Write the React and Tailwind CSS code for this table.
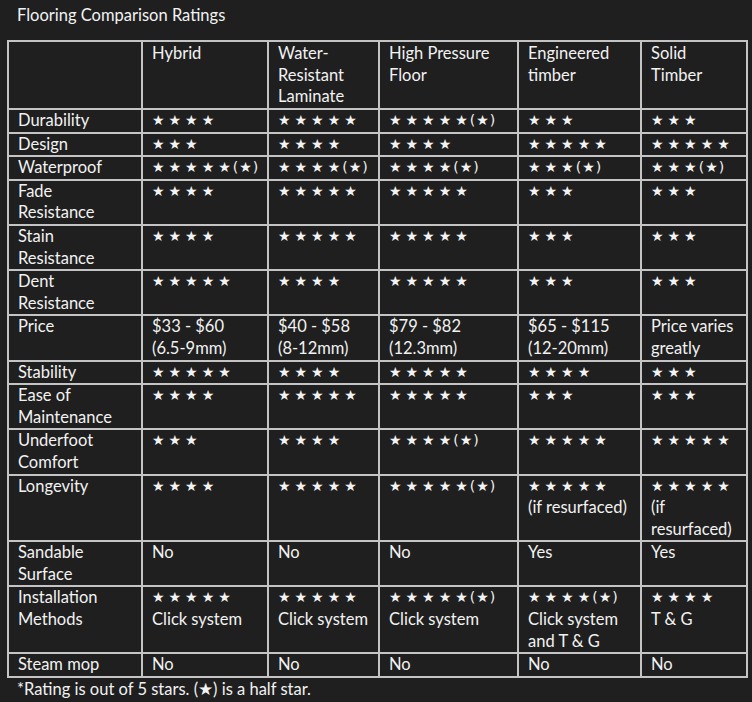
import React from "react";

const cols = [
  ["Hybrid"],
  ["Water-", "Resistant", "Laminate"],
  ["High Pressure", "Floor"],
  ["Engineered", "timber"],
  ["Solid", "Timber"],
];

// s = number of full stars, h = has half star, t = extra text lines
const rows = [
  { label: ["Durability"], cells: [{ s: 4 }, { s: 5 }, { s: 5, h: true }, { s: 3 }, { s: 3 }] },
  { label: ["Design"], cells: [{ s: 3 }, { s: 4 }, { s: 4 }, { s: 5 }, { s: 5 }] },
  { label: ["Waterproof"], cells: [{ s: 5, h: true }, { s: 4, h: true }, { s: 4, h: true }, { s: 3, h: true }, { s: 3, h: true }] },
  { label: ["Fade", "Resistance"], cells: [{ s: 4 }, { s: 5 }, { s: 5 }, { s: 3 }, { s: 3 }] },
  { label: ["Stain", "Resistance"], cells: [{ s: 4 }, { s: 5 }, { s: 5 }, { s: 3 }, { s: 3 }] },
  { label: ["Dent", "Resistance"], cells: [{ s: 5 }, { s: 4 }, { s: 5 }, { s: 3 }, { s: 3 }] },
  {
    label: ["Price"],
    cells: [
      { t: ["$33 - $60", "(6.5-9mm)"] },
      { t: ["$40 - $58", "(8-12mm)"] },
      { t: ["$79 - $82", "(12.3mm)"] },
      { t: ["$65 - $115", "(12-20mm)"] },
      { t: ["Price varies", "greatly"] },
    ],
  },
  { label: ["Stability"], cells: [{ s: 5 }, { s: 4 }, { s: 5 }, { s: 4 }, { s: 3 }] },
  { label: ["Ease of", "Maintenance"], cells: [{ s: 4 }, { s: 5 }, { s: 5 }, { s: 3 }, { s: 3 }] },
  { label: ["Underfoot", "Comfort"], cells: [{ s: 3 }, { s: 4 }, { s: 4, h: true }, { s: 5 }, { s: 5 }] },
  {
    label: ["Longevity"],
    cells: [{ s: 4 }, { s: 5 }, { s: 5, h: true }, { s: 5, t: ["(if resurfaced)"] }, { s: 5, t: ["(if", "resurfaced)"] }],
  },
  { label: ["Sandable", "Surface"], cells: [{ t: ["No"] }, { t: ["No"] }, { t: ["No"] }, { t: ["Yes"] }, { t: ["Yes"] }] },
  {
    label: ["Installation", "Methods"],
    cells: [
      { s: 5, t: ["Click system"] },
      { s: 5, t: ["Click system"] },
      { s: 5, h: true, t: ["Click system"] },
      { s: 4, h: true, t: ["Click system", "and T & G"] },
      { s: 4, t: ["T & G"] },
    ],
  },
  { label: ["Steam mop"], cells: [{ t: ["No"] }, { t: ["No"] }, { t: ["No"] }, { t: ["No"] }, { t: ["No"] }] },
];

const Stars = ({ n, half }) => (
  <div className="h-[21.6px] leading-[21px] whitespace-nowrap font-['DejaVu_Sans',sans-serif] text-[14px]">
    <span className="tracking-[4px]">{"★".repeat(n - 1)}</span>
    <span>★</span>
    {half && <span className="ml-[2px] tracking-[1px]">(★)</span>}
  </div>
);

const Lines = ({ lines }) =>
  lines.map((line, i) => (
    <div key={i} className="h-[21.6px] whitespace-nowrap">
      {line}
    </div>
  ));

export default function App() {
  return (
    <div className="w-[752px] h-[702px] bg-[#1f1f1f] text-[#f2f2f2] font-['Lato',sans-serif] text-[16.5px] leading-[21.6px] overflow-hidden">
      <div className="pl-[17px] pt-[5px] h-[40px]">Flooring Comparison Ratings</div>
      <table className="ml-[7px] w-[739px] table-fixed border-collapse border-2 border-[#c4c4c4]">
        <colgroup>
          <col className="w-[134px]" />
          <col className="w-[126px]" />
          <col className="w-[111px]" />
          <col className="w-[139px]" />
          <col className="w-[123px]" />
          <col className="w-[106px]" />
        </colgroup>
        <thead>
          <tr className="h-[68px]">
            <th className="border-2 border-[#c4c4c4]" />
            {cols.map((c) => (
              <th key={c[0]} className="border-2 border-[#c4c4c4] px-[9px] pt-[1px] align-top text-left font-normal">
                <Lines lines={c} />
              </th>
            ))}
          </tr>
        </thead>
        <tbody>
          {rows.map((r) => (
            <tr key={r.label[0]}>
              <td className="border-2 border-[#c4c4c4] px-[9px] align-top">
                <Lines lines={r.label} />
              </td>
              {r.cells.map((c, i) => (
                <td key={i} className="border-2 border-[#c4c4c4] px-[9px] align-top">
                  {c.s ? <Stars n={c.s} half={c.h} /> : null}
                  {c.t && <Lines lines={c.t} />}
                </td>
              ))}
            </tr>
          ))}
        </tbody>
      </table>
      <div className="pl-[17px] pt-[1px]">*Rating is out of 5 stars. (★) is a half star.</div>
    </div>
  );
}
